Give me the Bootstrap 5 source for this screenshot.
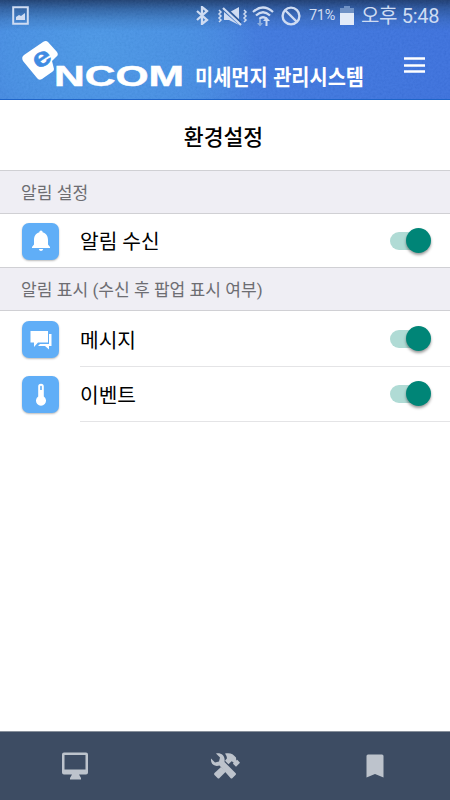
<!DOCTYPE html>
<html lang="ko">
<head>
<meta charset="utf-8">
<meta name="viewport" content="width=device-width, initial-scale=1">
<title>환경설정</title>
<link href="https://cdn.jsdelivr.net/npm/bootstrap@5.3.0/dist/css/bootstrap.min.css" rel="stylesheet">
<style>
body{font-family:Roboto,"Noto Sans CJK KR",sans-serif;color:#000;height:800px;overflow:hidden}
svg{display:block;flex:none}
.app-head{height:100px;border-bottom:1px solid #1e64c8;background:linear-gradient(#132f5dd9 0,#1b427a99 9px,#25528c44 20px,transparent 31px),radial-gradient(ellipse 160px 130px at 95px 50px,#4897e8 0,#438ee5 55%,transparent 100%),linear-gradient(90deg,#3c7cdd,#4289e3 35%,#3b76e0 60%,#386fdf)}
.grain{inset:0;width:100%;height:99px;opacity:.07}
.status{height:31px;padding-left:12px;padding-right:11px;color:#cfdcf2}
.status .pct{font-size:14.5px;width:27px;letter-spacing:-.3px;margin-left:8px;padding-top:1px}
.status .clock{font-size:20px;letter-spacing:-.3px;width:78px;margin-left:7px;padding-top:1px}
.brand-row{height:68px;padding-left:20px;padding-right:25px}
.page-title{height:70px;font-size:21.6px;font-weight:500;padding-top:6px;padding-right:3px}
.group-label{height:44px;background:#efeef4;border-top:1px solid #d0d0d4;border-bottom:1px solid #d0d0d4;color:#6d6d72;font-size:17.1px;padding-left:21px;padding-top:3px}
.setting{padding-left:22px}
.setting-body{height:55px;margin-left:21px;font-size:20.3px;padding-right:19px;border-bottom:1px solid #e4e4e6}
.setting-body label{padding-top:4px}
.setting.single .setting-body{height:53px;border:0}
.group-rows{padding-top:1px}
.tile{width:37px;height:37px;border-radius:7px;background:#60aef7;box-shadow:0 1px 2px #0004}
.single .tile{margin-top:1px}
.toggle{appearance:none;width:41px;height:26px;margin:0;position:relative}
.toggle::before{content:"";position:absolute;left:0;top:4px;width:36px;height:18px;border-radius:9px;background:#b0dbd5}
.toggle::after{content:"";position:absolute;right:0;top:0;width:25px;height:25px;border-radius:50%;background:#008577;box-shadow:0 2px 3px #0006}
.tabs{height:69px;background:#3d4c63;border-top:1px solid #88909b;color:#bdc3cc}
</style>
<script src="https://cdn.jsdelivr.net/npm/bootstrap@5.3.0/dist/js/bootstrap.bundle.min.js"></script>
</head>
<body class="d-flex flex-column bg-white">
<header class="app-head position-relative flex-shrink-0">
  <svg class="grain position-absolute"><filter id="g"><feTurbulence type="fractalNoise" baseFrequency=".45" numOctaves="2"/><feColorMatrix values="1 0 0 0 0 1 0 0 0 0 1 0 0 0 0 0 0 0 0 1"/></filter><rect width="450" height="99" filter="url(#g)"/></svg>
  <div class="status position-relative d-flex align-items-center">
    <svg class="me-auto" width="17" height="19" viewBox="0 0 17 19"><path d="M1.200 1.200h14.600v16.600H1.200z" fill="none" stroke="currentColor" stroke-width="2"/><path d="M4 14V11l3-2 2 1 4-3v7z" fill="currentColor"/></svg>
    <svg width="13" height="19" viewBox="0 0 13 19"><path d="M1 5l10 9-5 4V1l5 4L1 14" fill="none" stroke="currentColor" stroke-width="2.300"/></svg>
    <svg class="ms-2" width="31" height="20" viewBox="0 0 31 20"><path d="M2 4l2 2-2 2 2 2-2 2 2 2-2 2M27 4l2 2-2 2 2 2-2 2 2 2-2 2" fill="none" stroke="currentColor" stroke-width="1.500"/><path d="M13 6l9-5v17zM7 6v8h5l10 5z" fill="currentColor"/><path d="M7 .5l17 16" stroke="#2f5c9f" stroke-width="2.200"/><path d="M6 2l18 17" stroke="currentColor" stroke-width="2.200"/></svg>
    <svg class="ms-1" width="22" height="22" viewBox="0 0 22 22"><path d="M1 7q10-9 20 0M4 10.500q7-6.500 14 0M7.400 13.800q3.600-3.200 7.200 0" fill="none" stroke="currentColor" stroke-width="2.300"/><path d="M13.500 21v-5h-2.500l3.500-4 3.500 4h-2.500v5z" fill="currentColor"/><path d="M7 14v4H5l3 3.500 3-3.500H9v-4z" fill="#8badde"/></svg>
    <svg width="20" height="20" viewBox="0 0 20 20" style="margin-left:7px"><circle cx="10" cy="10" r="8.400" fill="none" stroke="currentColor" stroke-width="2.400"/><path d="M4 4l12 12" stroke="currentColor" stroke-width="2.400"/></svg>
    <span class="pct text-nowrap">71%</span>
    <svg width="14" height="19" viewBox="0 0 14 19" style="margin-left:4px"><path d="M4 0h6v2h4v5H0V2h4z" fill="#6f91c5"/><path d="M0 7h14v12H0z" fill="#e3ebf8"/></svg>
    <span class="clock text-nowrap">오후 5:48</span>
  </div>
  <div class="brand-row position-relative d-flex align-items-center justify-content-between">
    <svg width="350" height="66" viewBox="20 32 350 66" fill="#fff">
      <path d="M24 55L43 42q3-2 5 0l9 10q2 3-1 5l-4 4 2 8q0 2-2 3l-10 7q-3 2-5-1L23 61q-2-4 1-6z"/>
      <text transform="translate(42 59) rotate(-33)" text-anchor="middle" y="7" font-family="Liberation Sans" font-weight="bold" font-size="26" textLength="18" lengthAdjust="spacingAndGlyphs" fill="#408be2" stroke="#408be2" stroke-width=".5">e</text>
      <text x="54" y="85.500" font-family="Liberation Sans" font-weight="bold" font-size="30" textLength="130" lengthAdjust="spacingAndGlyphs" stroke="#fff" stroke-width=".5">NCOM</text>
      <text x="195" y="85" font-family="Noto Sans CJK KR" font-weight="700" font-size="21.500" textLength="169" lengthAdjust="spacingAndGlyphs">미세먼지 관리시스템</text>
    </svg>
    <svg width="21" height="16" viewBox="0 0 21 16"><path d="M0 1.500h21M0 8.500h21M0 14.500h21" stroke="#fff" stroke-width="2.300"/></svg>
  </div>
</header>
<main class="flex-grow-1">
  <h1 class="page-title m-0 d-flex align-items-center justify-content-center">환경설정</h1>
  <div class="group-label d-flex align-items-center">알림 설정</div>
  <div class="setting single d-flex align-items-center">
    <div class="tile d-flex align-items-center justify-content-center"><svg width="20" height="22" viewBox="0 0 20 22" fill="#fff"><path d="M10 .5c1 0 1.600.8 1.600 1.800C15.500 3.500 17 6.500 17 10v4.500l2 2.500v1H1v-1l2-2.500V10c0-3.500 1.500-6.500 5.400-7.700C8.400 1.300 9 .5 10 .5zM7.800 19h4.400q-.5 2-2.200 2t-2.200-2z"/></svg></div>
    <div class="setting-body flex-grow-1 d-flex align-items-center justify-content-between"><label for="a">알림 수신</label><input id="a" class="toggle" type="checkbox" checked></div>
  </div>
  <div class="group-label d-flex align-items-center">알림 표시 (수신 후 팝업 표시 여부)</div>
  <div class="group-rows">
  <div class="setting d-flex align-items-center">
    <div class="tile d-flex align-items-center justify-content-center"><svg width="22" height="20" viewBox="0 0 22 20" fill="#fff"><path d="M.5 1h17.500v11.500H8L4 17v-4.500H.5z"/><path d="M19 4h2.500v12H19v3.500L15 16H8l2-2h9z"/></svg></div>
    <div class="setting-body flex-grow-1 d-flex align-items-center justify-content-between"><label for="b">메시지</label><input id="b" class="toggle" type="checkbox" checked></div>
  </div>
  <div class="setting d-flex align-items-center">
    <div class="tile d-flex align-items-center justify-content-center"><svg width="12" height="24" viewBox="0 0 12 24"><path fill="#fff" fill-rule="evenodd" d="M3.200 3.500a2.800 2.800 0 0 1 5.600 0v10a5 5 0 1 1-5.600 0zM5.200 3.500v3.500h1.600V3.500a.8.8 0 0 0-1.600 0z"/></svg></div>
    <div class="setting-body flex-grow-1 d-flex align-items-center justify-content-between"><label for="c">이벤트</label><input id="c" class="toggle" type="checkbox" checked></div>
  </div>
  </div>
</main>
<nav class="tabs flex-shrink-0 row g-0 align-items-center">
  <div class="col d-flex justify-content-center"><svg width="28" height="28" viewBox="0 0 28 28"><path fill="currentColor" fill-rule="evenodd" d="M3 .5h22q2 0 2 2v18q0 2-2 2h-7l2 3.500v1.500H9V26l2-3.500H3q-2 0-2-2v-18q0-2 2-2zM3.500 3v14.500h21V3z"/></svg></div>
  <div class="col d-flex justify-content-center"><svg width="30" height="28" viewBox="0 0 30 28" fill="currentColor"><path d="M6 1.500l4 4-1 4-4 1-4-4C.5 12 4 15 9.500 13.500L20.500 26q1 1 2 0l3-3q1-1 0-2L14.500 10C15.500 4 11.500.5 6 1.500z"/><path d="M15 1.500c5-1 8 0 11 4l.3 3 1-.7 2.700 3-4 4-3-3 .5-1.500-2-1-3 3-3.500-3.500 2-2.500q-.5-3-2-4.800z"/><path d="M11 15l-6.500 6q-1 1 0 2l3 3q1 1 2 0l6.500-6.500z"/></svg></div>
  <div class="col d-flex justify-content-center"><svg width="18" height="24" viewBox="0 0 18 24"><path fill="currentColor" d="M2 .5h14q1.500 0 1.500 1.500v21.500L9 20 .5 23.500V2Q.5.5 2 .5z"/></svg></div>
</nav>
</body>
</html>
